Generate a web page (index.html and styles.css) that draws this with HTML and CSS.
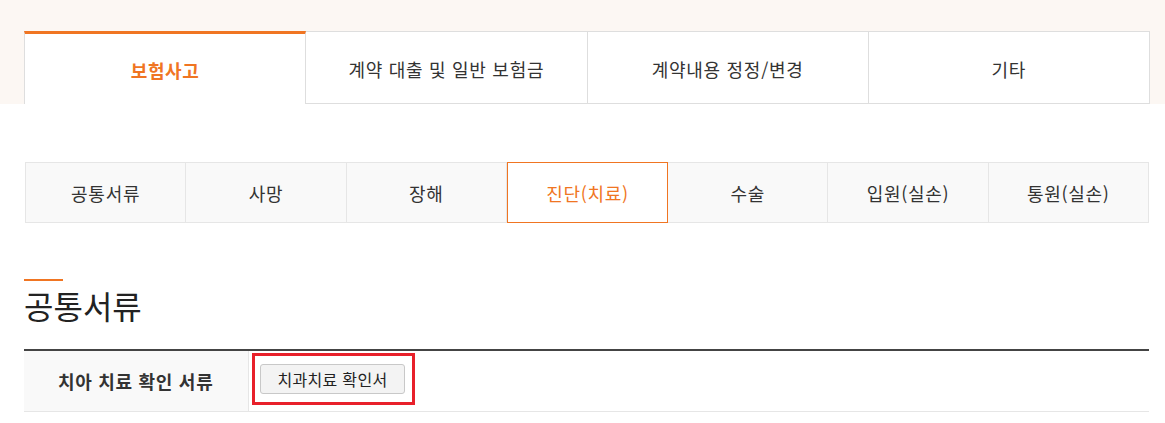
FILE: index.html
```html
<!DOCTYPE html>
<html lang="ko">
<head>
<meta charset="utf-8">
<title>보험사고</title>
<link rel="stylesheet" href="styles.css">
</head>
<body>
<div class="top-band">
  <ul class="main-tabs">
    <li class="main-tab is-active">보험사고</li>
    <li class="main-tab">계약 대출 및 일반 보험금</li>
    <li class="main-tab">계약내용 정정/변경</li>
    <li class="main-tab">기타</li>
  </ul>
</div>
<div class="content">
  <ul class="sub-tabs">
    <li class="sub-tab">공통서류</li>
    <li class="sub-tab">사망</li>
    <li class="sub-tab">장해</li>
    <li class="sub-tab is-active">진단(치료)</li>
    <li class="sub-tab">수술</li>
    <li class="sub-tab">입원(실손)</li>
    <li class="sub-tab">통원(실손)</li>
  </ul>
  <h2 class="section-title">공통서류</h2>
  <table class="doc-table">
    <tr>
      <th class="doc-head">치아 치료 확인 서류</th>
      <td class="doc-cell"><span class="highlight"><button class="doc-btn" type="button">치과치료 확인서</button></span></td>
    </tr>
  </table>
</div>
</body>
</html>
```

FILE: styles.css
```css
* { box-sizing: border-box; }
body {
  margin: 0;
  font-family: "Noto Sans CJK KR", "Noto Sans", sans-serif;
  color: #333;
  background: #fff;
}
ul { list-style: none; margin: 0; padding: 0; }

.top-band {
  background: #fcf7f3;
  padding: 31px 15px 0 24px;
}
.main-tabs {
  display: flex;
  height: 73px;
}
.main-tab {
  flex: 1;
  display: flex;
  align-items: center;
  justify-content: center;
  background: #fff;
  border: 1px solid #dedede;
  border-left: none;
  font-size: 18px;
  letter-spacing: 0.7px;
  color: #333;
  padding-top: 3px;
}
.main-tab:first-child { border-left: 1px solid #dedede; }
.main-tab.is-active {
  border-top: 3px solid #f07522;
  border-bottom: none;
  color: #f07522;
  font-weight: bold;
  letter-spacing: 0.6px;
  padding-top: 1px;
}

.content {
  padding: 58px 16px 0 24px;
}
.sub-tabs {
  display: flex;
  height: 61px;
  margin-left: 1px;
}
.sub-tab {
  flex: 1;
  display: flex;
  align-items: center;
  justify-content: center;
  background: #f9f9f9;
  border: 1px solid #e6e6e6;
  border-left: none;
  font-size: 18px;
  letter-spacing: 0.7px;
  color: #333;
}
.sub-tab:first-child { border-left: 1px solid #e6e6e6; }
.sub-tab.is-active {
  background: #fff;
  border: 1px solid #f07522;
  color: #f07522;
}

.section-title {
  margin: 56px 0 0;
  padding-top: 6px;
  position: relative;
  font-size: 32px;
  font-weight: normal;
  line-height: 40px;
  color: #222;
  height: 70px;
}
.section-title::before {
  content: "";
  position: absolute;
  left: 0;
  top: 0;
  width: 39px;
  height: 2px;
  background: #f07522;
}

.doc-table {
  width: 100%;
  border-collapse: collapse;
  border-top: 2px solid #444;
}
.doc-head {
  width: 224px;
  height: 61px;
  background: #f9f9f9;
  border-right: 1px solid #e6e6e6;
  border-bottom: 1px solid #e6e6e6;
  font-size: 18px;
  letter-spacing: 0.7px;
  font-weight: bold;
  color: #333;
  text-align: center;
}
.doc-cell {
  border-bottom: 1px solid #e6e6e6;
  padding: 2px 0 0 3px;
  vertical-align: top;
}
.highlight {
  display: inline-block;
  border: 3px solid #e8202a;
  padding: 8px 7px 8px 5px;
}
.doc-btn {
  display: block;
  height: 30px;
  padding: 0 17px;
  background: #f3f3f3;
  border: 1px solid #c8c8c8;
  border-radius: 3px;
  font-family: inherit;
  font-size: 16px;
  letter-spacing: 0.3px;
  color: #222;
}
```
